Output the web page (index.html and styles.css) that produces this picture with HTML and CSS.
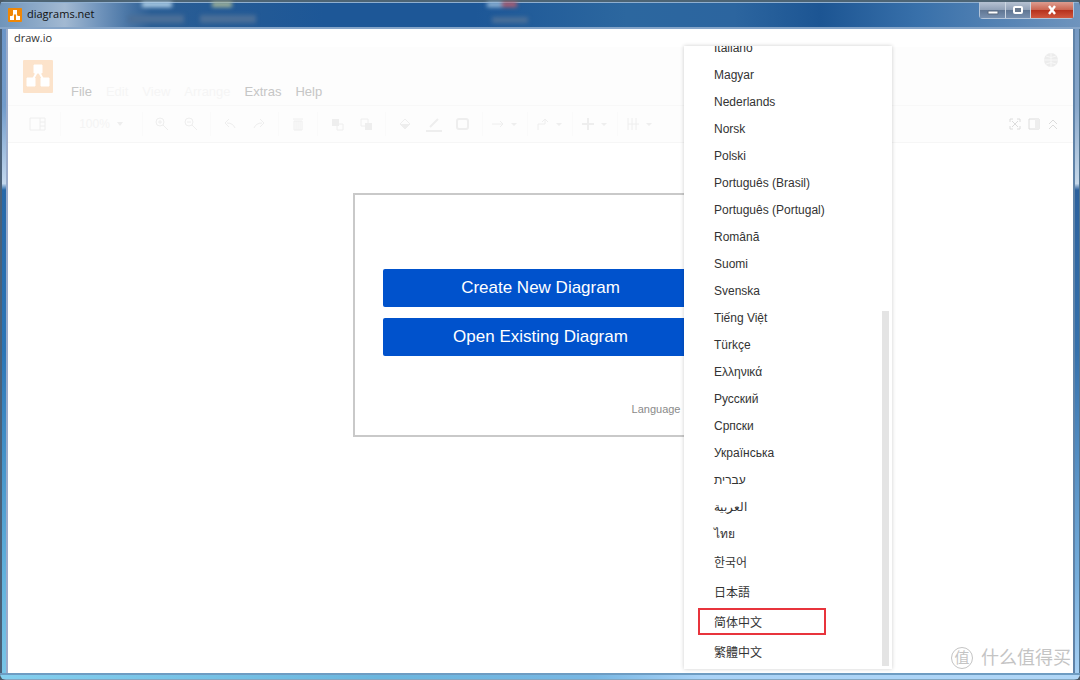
FILE: index.html
```
<!DOCTYPE html>
<html lang="en">
<head>
    <meta charset="UTF-8">
    <meta name="viewport" content="width=device-width, initial-scale=1.0">
    <title>diagrams.net</title>
    <link rel="stylesheet" href="styles.css">
</head>
<body>

<div class="window">
    <header class="titlebar">
        <svg class="app-icon" viewBox="0 0 14 14"><rect width="14" height="14" rx="1" fill="#f08705"/><path d="M7 4L4 10M7 4l3 6" stroke="#fff" stroke-width="1.3"/><path d="M5 2h4v4H5zM2 8h4v4H2zM8 8h4v4H8z" fill="#fff"/></svg>
        <span class="title">diagrams.net</span>
        <div class="window-buttons">
            <button class="minimize" aria-label="Minimize"><svg width="12" height="12"><path d="M1 7h10v3H1z" fill="#fff" stroke="#5b6b80" stroke-width="1"/></svg></button>
            <button class="maximize" aria-label="Maximize"><svg width="12" height="12"><rect x="2" y="3" width="8" height="6" rx="1" fill="#68788d" stroke="#fff" stroke-width="2"/></svg></button>
            <button class="close" aria-label="Close"><svg width="12" height="12"><path d="M3 2l6 8M9 2L3 10" stroke="#fff" stroke-width="2.4"/></svg></button>
        </div>
        <!-- desktop icons showing through the glass -->
        <i class="glow glow-one"></i>
        <i class="glow glow-two"></i>
        <i class="glow glow-three"></i>
        <i class="smudge smudge-one"></i>
        <i class="smudge smudge-two"></i>
        <i class="smudge smudge-three"></i>
    </header>

    <div class="edge-left"></div>

    <main class="content">
        <div class="appname">draw.io</div>

        <div class="editor-header">
            <svg class="logo" viewBox="0 0 30 33"><rect width="30" height="33" rx="1" fill="#fce3cb"/><path d="M15 10L8 23M15 10l7 13" stroke="#fff" stroke-width="2"/><path d="M11 5h8v8h-8zM4 18h8v8H4zM18 18h8v8h-8z" fill="#fff" stroke="#fff" stroke-width="1" stroke-linejoin="round"/></svg>
            <nav class="menubar">
                <button>File</button>
                <button disabled>Edit</button>
                <button disabled>View</button>
                <button disabled>Arrange</button>
                <button>Extras</button>
                <button>Help</button>
            </nav>
            <button class="globe" aria-label="Language"><svg width="16" height="16"><circle cx="8" cy="8" r="7" fill="#ececec"/><path d="M1 8h14M8 1v14M3 4q5 3 10 0M3 12q5-3 10 0" fill="none" stroke="#f8f8f8"/></svg></button>
        </div>

        <div class="toolbar">
            <button class="tool wide" aria-label="View"><svg width="18" height="16"><path d="M1 2h15v12H1zM11 2v12M11 6h5M11 10h5"/></svg></button>
            <span class="sep"></span>
            <button class="tool zoom">100% <svg width="8" height="6"><path d="M1 1h6L4 5z" class="solid"/></svg></button>
            <span class="sep"></span>
            <button class="tool" aria-label="Zoom in"><svg width="16" height="16"><circle cx="6" cy="6" r="4"/><path d="M9 9l5 5M4 6h4M6 4v4"/></svg></button>
            <button class="tool" aria-label="Zoom out"><svg width="16" height="16"><circle cx="6" cy="6" r="4"/><path d="M9 9l5 5M4 6h4"/></svg></button>
            <span class="sep"></span>
            <button class="tool" aria-label="Undo"><svg width="16" height="16"><path d="M13 12q-2-5-8-5M7 3L3 7l4 4"/></svg></button>
            <button class="tool" aria-label="Redo"><svg width="16" height="16"><path d="M3 12q2-5 8-5M9 3l4 4-4 4"/></svg></button>
            <span class="sep"></span>
            <button class="tool" aria-label="Delete"><svg width="16" height="16"><path d="M4 5h8v9H4zM3 3h10M6 5v9M8 5v9M10 5v9"/></svg></button>
            <span class="sep"></span>
            <button class="tool" aria-label="To front"><svg width="16" height="16"><path d="M3 3h7v7H3z" class="solid"/><path d="M10 8h4v6H8v-4"/></svg></button>
            <button class="tool" aria-label="To back"><svg width="16" height="16"><path d="M3 3h7v7H3z"/><path d="M7 7h7v7H7z" class="solid"/></svg></button>
            <span class="sep"></span>
            <button class="tool" aria-label="Fill color"><svg width="16" height="16"><path d="M3 8l5-5 5 5-5 5z"/><path d="M3 8h10l-5 5z" class="solid"/></svg></button>
            <button class="tool" aria-label="Line color"><svg width="18" height="16"><path d="M5 11l8-8M1 15h16" stroke-width="2"/></svg></button>
            <button class="tool" aria-label="Shadow"><svg width="16" height="16"><rect x="2" y="3" width="11" height="10" rx="2" stroke-width="2"/></svg></button>
            <span class="sep"></span>
            <button class="tool wide" aria-label="Connection"><svg width="30" height="16"><path d="M2 8h11M10 5l3 3-3 3"/><path d="M21 7h6l-3 3z" class="solid"/></svg></button>
            <span class="sep"></span>
            <button class="tool wide" aria-label="Waypoints"><svg width="30" height="16"><path d="M3 14V8h7V4M7 6l3-3 3 3"/><path d="M21 7h6l-3 3z" class="solid"/></svg></button>
            <span class="sep"></span>
            <button class="tool wide" aria-label="Insert"><svg width="30" height="16"><path d="M2 8h12M8 2v12" stroke-width="2"/><path d="M21 7h6l-3 3z" class="solid"/></svg></button>
            <span class="sep"></span>
            <button class="tool wide" aria-label="Table"><svg width="30" height="16"><path d="M3 2v12M7 2v12M11 2v12M3 8h11"/><path d="M21 7h6l-3 3z" class="solid"/></svg></button>
            <div class="view-tools">
                <button aria-label="Fullscreen"><svg width="12" height="12"><path d="M1 4V1h3M8 1h3v3M11 8v3H8M4 11H1V8M3 3l6 6M9 3L3 9"/></svg></button>
                <button aria-label="Format"><svg width="12" height="12"><path d="M1 1h10v10H1z"/><path d="M7 1h4v10H7z" class="solid"/></svg></button>
                <button aria-label="Collapse"><svg width="12" height="12"><path d="M2 6l4-4 4 4M2 11l4-4 4 4"/></svg></button>
            </div>
        </div>

        <section class="dialog">
            <button class="primary">Create New Diagram</button>
            <button class="primary">Open Existing Diagram</button>
            <a class="language" href="#">Language</a>
        </section>

        <ul class="menu">
            <li><button>Italiano</button></li>
            <li><button>Magyar</button></li>
            <li><button>Nederlands</button></li>
            <li><button>Norsk</button></li>
            <li><button>Polski</button></li>
            <li><button>Português (Brasil)</button></li>
            <li><button>Português (Portugal)</button></li>
            <li><button>Română</button></li>
            <li><button>Suomi</button></li>
            <li><button>Svenska</button></li>
            <li><button>Tiếng Việt</button></li>
            <li><button>Türkçe</button></li>
            <li><button>Ελληνικά</button></li>
            <li><button>Русский</button></li>
            <li><button>Српски</button></li>
            <li><button>Українська</button></li>
            <li><button>עברית</button></li>
            <li><button>العربية</button></li>
            <li class="thai"><button>ไทย</button></li>
            <li class="tall"><button lang="ko">한국어</button></li>
            <li class="tall"><button lang="ja">日本語</button></li>
            <li class="tall marked"><button lang="zh-CN">简体中文</button></li>
            <li class="tall"><button lang="zh-TW">繁體中文</button></li>
        </ul>

        <div class="watermark" lang="zh-CN"><span class="badge">值</span>什么值得买</div>
    </main>

    <div class="edge-right"></div>
    <div class="edge-bottom"></div>
</div>

</body>
</html>
```
FILE: styles.css
```
* {
    box-sizing: border-box;
}

body {
    margin: 0;
    background-color: #4c5a66;
    font-family: "Liberation Sans", Arial, "Noto Sans CJK SC", sans-serif;
    color: #333;
}

button {
    padding: 0;
    border: none;
    background: none;
    font-family: inherit;
    color: inherit;
    cursor: pointer;
}

/* Window frame */
.window {
    display: grid;
    grid-template-columns: 8px 1fr 7px;
    grid-template-rows: 29px 1fr 7px;
    height: 100vh;
    border-radius: 6px;
    overflow: hidden;
}

.titlebar {
    position: relative;
    grid-column: 1 / -1;
    display: flex;
    align-items: flex-start;
    gap: 5px;
    padding: 0 6px 0 8px;
    border-top: 2px solid #4d6474;
    border-bottom: 2px solid #86a5c8;
    box-shadow: inset 0 1px #8fafd0;
    background: linear-gradient(90deg, #6f94ba 0, #a2b9d2 6%, #7396bd 9%, #2a5d94 14%, #1d5797 30%, #1d5797 44%, #2c679f 58%, #2c659f 68%, #1c5593 76%, #3870aa 85%, #6f94bd 100%);
}

.app-icon {
    width: 14px;
    height: 14px;
    margin-top: 6px;
}

.title {
    flex: 1;
    margin-top: 3px;
    font: 11px/18px "Open Sans", sans-serif;
    color: #111;
}

.window-buttons {
    z-index: 1;
    display: flex;
    border: 1px solid #b4c4d8;
    border-top: none;
    border-radius: 0 0 4px 4px;
}

.window-buttons button {
    display: flex;
    justify-content: center;
    align-items: center;
    width: 25px;
    height: 16px;
    background: linear-gradient(#b6c2d2 0, #91a1b7 48%, #5f7592 50%, #7890af 100%);
}

.window-buttons .maximize {
    border-left: 1px solid #ccd6e2;
}

.window-buttons .close {
    width: 43px;
    border-left: 1px solid #ccd6e2;
    background: linear-gradient(#dd9d90 0, #cb6652 48%, #b5301b 50%, #d0583f 100%);
}

.glow, .smudge {
    position: absolute;
    filter: blur(2px);
}

.glow {
    top: 0;
    height: 5px;
    width: 30px;
    background-color: #b9d8ed;
}

.glow-one { left: 142px; }
.glow-two { left: 212px; width: 20px; background-color: #a9b998; }
.glow-three { left: 487px; background: linear-gradient(90deg, #98bad9 50%, #b95d6d 50%); }

.smudge {
    top: 13px;
    height: 8px;
    width: 56px;
    background-color: #4b6f98;
}

.smudge-one { left: 128px; }
.smudge-two { left: 200px; }
.smudge-three { left: 492px; top: 15px; width: 36px; height: 6px; }

.edge-left {
    border-left: 2px solid #4a6078;
    border-right: 2px solid #9aabca;
    background: linear-gradient(#6b95c8 0, #729ccb 12%, #c3d8ee 24%, #2768a8 25%, #2b75b6 50%, #62b2dd 85%, #79c5e7 100%);
}

.edge-right {
    border-left: 2px solid #6083a8;
    border-right: 1px solid #52748f;
    background: linear-gradient(#7599c3 0, #89a8cb 12%, #c6d8e9 24%, #2c619d 25%, #3571ac 50%, #75addb 85%, #a6d0f4 100%);
}

.edge-bottom {
    grid-column: 1 / -1;
    border-top: 2px solid #6e9cc2;
    border-bottom: 1px solid #84a6c0;
    background: linear-gradient(90deg, #84cfee 0, #6bb6de 35%, #78b7e3 55%, #a9d2f6 65%, #b0d6f6 100%);
}

/* Editor */
.content {
    position: relative;
    display: flex;
    flex-direction: column;
    overflow: hidden;
    background-color: #fff;
}

.appname {
    padding-left: 6px;
    font: 11px/18px "Open Sans", sans-serif;
}

.editor-header {
    display: flex;
    align-items: flex-start;
    height: 59px;
    padding: 13px 14px 0 15px;
    background-color: #fdfdfd;
    border-bottom: 1px solid #f8f8f8;
}

.logo {
    width: 30px;
    height: 33px;
}

.menubar {
    display: flex;
    flex: 1;
    gap: 14px;
    margin-top: 24px;
    padding-left: 18px;
    color: #c6c6c6;
}

.menubar button {
    font-size: 13px;
    line-height: 16px;
}

.menubar button:disabled {
    color: #f5f5f5;
}

.globe {
    height: 16px;
    margin-top: -8px;
}

.toolbar {
    display: flex;
    align-items: center;
    gap: 1px;
    height: 37px;
    padding: 0 14px 0 13px;
    background-color: #fdfdfd;
    border-bottom: 1px solid #f6f6f6;
    color: #f4f4f4;
}

.toolbar svg {
    fill: none;
    stroke: #eee;
}

.toolbar .solid {
    fill: #eee;
    stroke: none;
}

.tool {
    display: flex;
    justify-content: center;
    align-items: center;
    width: 28px;
    height: 24px;
}

.tool.wide {
    width: 34px;
}

.tool.zoom {
    width: 71px;
    gap: 6px;
    font-size: 12px;
}

.sep {
    width: 1px;
    height: 24px;
    margin: 0 4px;
    background-color: #fafafa;
}

.view-tools {
    display: flex;
    gap: 7px;
    margin-left: auto;
}

.view-tools button {
    height: 12px;
}

.view-tools svg {
    display: block;
    stroke: #dcdcdc;
}

/* Start dialog */
.dialog {
    display: flex;
    flex-direction: column;
    align-self: center;
    gap: 11px;
    width: 376px;
    margin-top: 50px;
    padding: 74px 28px 18px;
    border: 2px solid #c9c9c9;
    background-color: #fff;
}

.primary {
    height: 38px;
    border-radius: 2px;
    background-color: #0052cc;
    font-size: 17px;
    color: #fff;
}

.primary:hover {
    background-color: #0065ff;
}

.language {
    align-self: flex-end;
    margin-top: 34px;
    padding-right: 18px;
    font-size: 11px;
    line-height: 16px;
    color: #8a8a8a;
    text-decoration: none;
}

/* Language menu, scrolled to its end */
.menu {
    position: absolute;
    top: 17px;
    right: 181px;
    bottom: 4px;
    display: flex;
    flex-direction: column;
    justify-content: flex-end;
    width: 208px;
    margin: 0;
    padding: 0 0 1px;
    overflow: hidden;
    list-style: none;
    background-color: #fff;
    box-shadow: 0 0 4px rgba(0, 0, 0, 0.2);
}

/* scrollbar thumb */
.menu::after {
    content: "";
    position: absolute;
    right: 3px;
    bottom: 3px;
    width: 7px;
    height: 57%;
    background-color: #e4e4e4;
}

.menu li {
    flex: none;
    height: 27px;
    padding: 0 14px;
}

.menu li.thai {
    height: 28px;
}

.menu li.tall {
    height: 30px;
}

.menu button {
    width: 128px;
    height: 27px;
    padding-left: 16px;
    font-size: 12px;
    text-align: left;
}

.menu button:hover {
    background-color: #eee;
}

.menu .marked button {
    padding-left: 14px;
    border: 2px solid #e8343c;
}

:lang(ko) { font-family: "Liberation Sans", "Noto Sans CJK KR", sans-serif; }
:lang(ja) { font-family: "Liberation Sans", "Noto Sans CJK JP", sans-serif; }
:lang(zh-CN) { font-family: "Liberation Sans", "Noto Sans CJK SC", sans-serif; }
:lang(zh-TW) { font-family: "Liberation Sans", "Noto Sans CJK TC", sans-serif; }

.watermark {
    position: absolute;
    right: 2px;
    bottom: 4px;
    display: flex;
    align-items: center;
    gap: 8px;
    font-size: 18px;
    line-height: 22px;
    color: #c4c4c4;
}

.badge {
    width: 22px;
    height: 22px;
    border: 1px solid #c4c4c4;
    border-radius: 50%;
    font-size: 15px;
    line-height: 19px;
    text-align: center;
}
```
